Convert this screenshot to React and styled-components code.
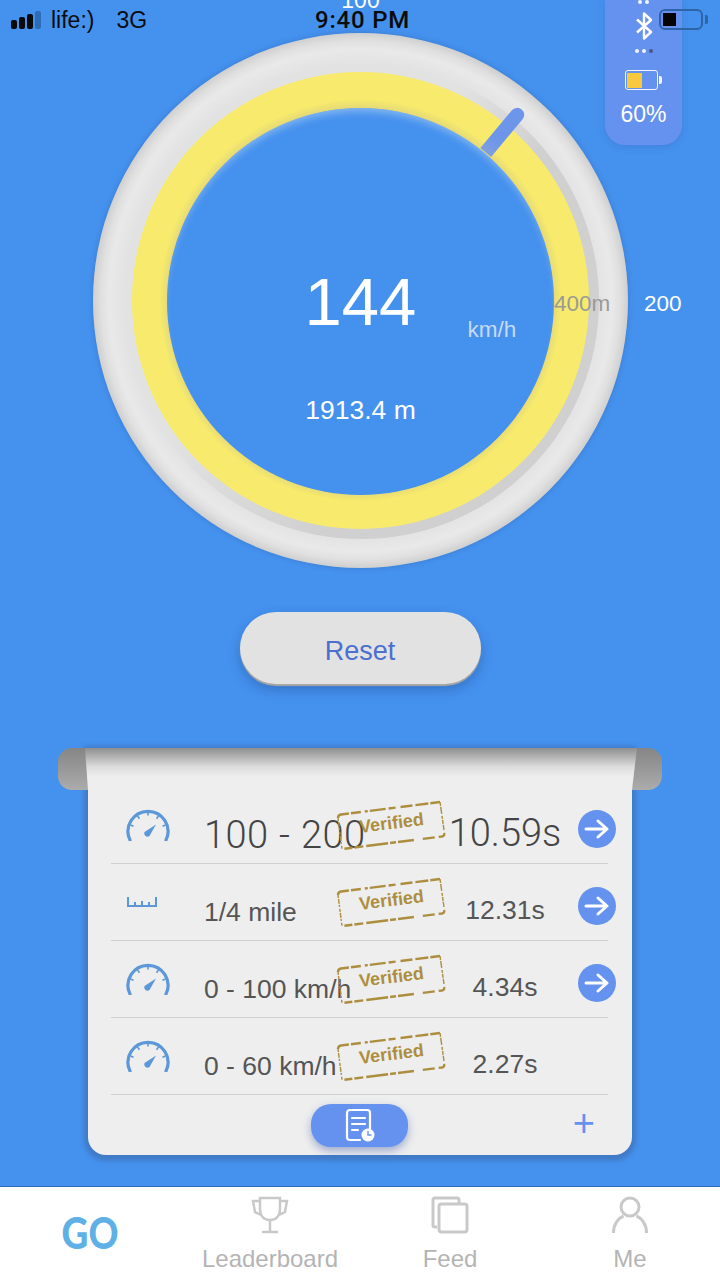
import React from "react";
import styled, { createGlobalStyle } from "styled-components";

const rows = [
  { kind: "gauge", label: "100 - 200", time: "10.59s", big: true, arrow: true },
  { kind: "ruler", label: "1/4 mile", time: "12.31s", arrow: true },
  { kind: "gauge", label: "0 - 100 km/h", time: "4.34s", arrow: true },
  { kind: "gauge", label: "0 - 60 km/h", time: "2.27s" },
];

function GaugeIcon() {
  return (
    <svg width="44" height="32" viewBox="0 0 44 32" fill="none" stroke="#5b97d9">
      <path d="M4 31 A20 20 0 1 1 40 31" strokeWidth="3.200" strokeLinecap="round" />
      <path d="M22 3v3.500M11.500 7l2 2.700M32.500 7l-2 2.700M4.500 16l3 1.200M39.500 16l-3 1.200" strokeWidth="1.600" />
      <path d="M18.500 23 L30 15.500 L23.500 27 A3.300 3.300 0 0 1 18.500 23Z" fill="#5b97d9" stroke="none" />
    </svg>
  );
}

function RulerIcon() {
  return (
    <svg width="32" height="12" viewBox="0 0 32 12" fill="none" stroke="#5b97d9" strokeWidth="2">
      <path d="M2 1v9h28V1M9 6v4M16 5v5M23 6v4" />
    </svg>
  );
}

function ArrowIcon() {
  return (
    <svg width="26" height="22" viewBox="0 0 26 22" fill="none" stroke="#fff" strokeWidth="3" strokeLinecap="round" strokeLinejoin="round">
      <path d="M2 11h21M14 3l9 8-9 8" />
    </svg>
  );
}

function StampFrame() {
  return (
    <StampSvg viewBox="0 0 110 50" fill="none" stroke="#ad8e3f">
      <path d="M2 18 Q2 15 5 14.500 L104 2" strokeWidth="2.400" strokeDasharray="13 2 10 4 3 2 16 3 7 5 12 3" />
      <path d="M104 2 L108 30" strokeWidth="1.400" strokeDasharray="4 1 7 2 3 1" />
      <path d="M108 33 Q109 36 106 36.500 L6 49" strokeWidth="2.400" strokeDasharray="8 4 12 9 16 2 6 2 22 3 9 2" />
      <path d="M2 18 L6 49" strokeWidth="1.400" strokeDasharray="3 1 5 1 2 2" />
    </StampSvg>
  );
}

function DocIcon() {
  return (
    <svg width="30" height="34" viewBox="0 0 30 34" fill="none" stroke="#fff" strokeWidth="2.200" strokeLinecap="round">
      <path d="M15 31H5a3 3 0 0 1-3-3V4a3 3 0 0 1 3-3h17a3 3 0 0 1 3 3v16" />
      <path d="M7 9h13M7 15h13M7 21h6" />
      <circle cx="23" cy="26" r="6.500" fill="#fff" stroke="none" />
      <path d="M23 22.500V26h3" stroke="#6592ee" strokeWidth="1.400" />
    </svg>
  );
}

function Trophy() {
  return (
    <svg width="38" height="38" viewBox="0 0 38 38" fill="none" stroke="#c9c9c9" strokeWidth="2.500">
      <path d="M9 2h20v11c0 7-4 11-10 11S9 20 9 13z" />
      <path d="M9 5H2l2 11 6 3M29 5h7l-2 11-6 3M19 24v11M11 36h16" />
    </svg>
  );
}

function Cards() {
  return (
    <svg width="38" height="38" viewBox="0 0 38 38" fill="none" stroke="#c9c9c9" strokeWidth="3">
      <path d="M6 31H4a2 2 0 0 1-2-2V4a2 2 0 0 1 2-2h22a2 2 0 0 1 2 2v3" />
      <rect x="8" y="8" width="28" height="28" rx="2.500" />
    </svg>
  );
}

function Person() {
  return (
    <svg width="38" height="38" viewBox="0 0 38 38" fill="none" stroke="#c9c9c9" strokeWidth="3">
      <circle cx="19" cy="11" r="9" />
      <path d="M2.500 37c0-9 5-15 10-17M35.500 37c0-9-5-15-10-17" />
    </svg>
  );
}

function Bluetooth() {
  return (
    <svg width="18" height="28" viewBox="0 0 18 28" fill="none" stroke="#fff" strokeWidth="2.400" strokeLinejoin="round">
      <path d="M2 7.500 16 20 9 26.500V1.500L16 8 2 20.500" />
    </svg>
  );
}

export default function App() {
  return (
    <Page>
      <GlobalStyle />
      <StatusBar>
        <Signal>
          <Bar $h={9} />
          <Bar $h={12} />
          <Bar $h={15} />
          <Bar $h={18} $dim />
        </Signal>
        <Carrier>life:)</Carrier>
        <Network>3G</Network>
        <Clock>9:40 PM</Clock>
        <PhoneBattery>
          <PhoneBatteryFill />
        </PhoneBattery>
      </StatusBar>

      <DevicePanel>
        <Dots $before={0} $after={8}>
          <Dot />
          <Dot />
        </Dots>
        <Bluetooth />
        <Dots $before={9} $after={17}>
          <Dot />
          <Dot />
          <Dot $off />
        </Dots>
        <SmallBattery>
          <SmallBatteryFill />
        </SmallBattery>
        <PanelText>60%</PanelText>
      </DevicePanel>

      <Dial>
        <TopMark>100</TopMark>
        <Groove>
          <YellowRing>
            <Inner>
              <SpeedWrap>
                <Speed>144</Speed>
                <Unit>km/h</Unit>
              </SpeedWrap>
              <Distance>1913.4 m</Distance>
            </Inner>
          </YellowRing>
        </Groove>
        <Needle />
        <RingMark>400m</RingMark>
        <SideMark>200</SideMark>
      </Dial>

      <ResetButton>Reset</ResetButton>

      <Sheet>
        <Curl $side="left" />
        <Curl $side="right" />
        <SheetTop />
        {rows.map((r, i) => (
          <Row key={i}>
            <IconCell>{r.kind === "gauge" ? <GaugeIcon /> : <RulerIcon />}</IconCell>
            <Label $big={r.big}>{r.label}</Label>
            <Stamp>
              <StampFrame />
              <StampText>Verified</StampText>
            </Stamp>
            <Time $big={r.big}>{r.time}</Time>
            {r.arrow && (
              <ArrowButton>
                <ArrowIcon />
              </ArrowButton>
            )}
          </Row>
        ))}
        <SheetFooter>
          <span />
          <Pill>
            <DocIcon />
          </Pill>
          <Plus>+</Plus>
        </SheetFooter>
      </Sheet>

      <TabBar>
        <Tab>
          <GoMark>GO</GoMark>
        </Tab>
        <Tab>
          <Trophy />
          <TabLabel>Leaderboard</TabLabel>
        </Tab>
        <Tab>
          <Cards />
          <TabLabel>Feed</TabLabel>
        </Tab>
        <Tab>
          <Person />
          <TabLabel>Me</TabLabel>
        </Tab>
      </TabBar>
    </Page>
  );
}

const GlobalStyle = createGlobalStyle`
  body {
    margin: 0;
    font-family: "Liberation Sans", Arial, sans-serif;
    background: #4591ee;
  }
`;

const Page = styled.div`
  position: relative;
  width: 720px;
  height: 1280px;
  overflow: hidden;
  display: flex;
  flex-direction: column;
  align-items: center;
  background: #4591ee;
`;

const StatusBar = styled.div`
  position: relative;
  z-index: 4;
  align-self: stretch;
  height: 33px;
  display: flex;
  align-items: flex-start;
  padding: 7px 0 0 11px;
  box-sizing: border-box;
  color: #0c0c0c;
  font-size: 23px;
  line-height: 27px;
`;

const Signal = styled.div`
  display: flex;
  align-items: flex-end;
  gap: 2px;
  height: 22px;
  width: 32px;
`;

const Bar = styled.div`
  width: 6px;
  height: ${(p) => p.$h}px;
  border-radius: 2px;
  background: ${(p) => (p.$dim ? "#2f6cb8" : "#0a0a0a")};
`;

const Carrier = styled.span`
  margin-left: 8px;
`;

const Network = styled.span`
  margin-left: 22px;
`;

const Clock = styled.span`
  position: absolute;
  left: 5px;
  right: 0;
  top: 7px;
  text-align: center;
  font-size: 24px;
  font-weight: 500;
  font-family: Roboto, "Liberation Sans", sans-serif;
  letter-spacing: 0.8px;
`;

const PhoneBattery = styled.div`
  position: absolute;
  left: 659px;
  top: 9px;
  width: 44px;
  height: 21px;
  box-sizing: border-box;
  padding: 2px;
  border: 2px solid #2f63a8;
  border-radius: 6px;
  &::after {
    content: "";
    position: absolute;
    right: -7px;
    top: 4px;
    width: 3px;
    height: 9px;
    background: #2f63a8;
    border-radius: 0 2px 2px 0;
  }
`;

const PhoneBatteryFill = styled.div`
  width: 13px;
  height: 100%;
  background: #050505;
`;

const DevicePanel = styled.div`
  position: absolute;
  z-index: 3;
  left: 605px;
  top: 0;
  width: 77px;
  height: 145px;
  display: flex;
  flex-direction: column;
  align-items: center;
  border-radius: 0 0 20px 20px;
  background: #6592ee;
  box-shadow: 0 2px 6px rgba(50, 90, 170, 0.25);
`;

const Dots = styled.div`
  display: flex;
  gap: 3px;
  height: 4px;
  margin: ${(p) => p.$before}px 0 ${(p) => p.$after}px;
`;

const Dot = styled.div`
  width: 4px;
  height: 4px;
  border-radius: 50%;
  background: ${(p) => (p.$off ? "#47598a" : "#f1f5ff")};
`;

const SmallBattery = styled.div`
  position: relative;
  width: 33px;
  height: 20px;
  box-sizing: border-box;
  padding: 1.5px;
  margin-right: 5px;
  border: 1px solid #f1f5ff;
  border-radius: 3px;
  &::after {
    content: "";
    position: absolute;
    right: -5px;
    top: 5px;
    width: 3px;
    height: 8px;
    background: #f1f5ff;
    border-radius: 0 2px 2px 0;
  }
`;

const SmallBatteryFill = styled.div`
  width: 15px;
  height: 100%;
  background: #f8c93e;
`;

const PanelText = styled.div`
  margin-top: 11px;
  color: #fff;
  font-size: 23px;
  line-height: 26px;
`;

const Dial = styled.div`
  position: relative;
  flex: none;
  width: 535px;
  height: 535px;
  margin-left: 1px;
  display: flex;
  align-items: center;
  justify-content: center;
  border-radius: 50%;
  background: radial-gradient(
    circle closest-side,
    #e2e2e2 88%,
    #e9e9e9 94%,
    #e0e0e0 97%,
    #cfcfcf 100%
  );
  box-shadow: 0 0 5px rgba(40, 80, 140, 0.35);
`;

const TopMark = styled.span`
  position: absolute;
  left: 0;
  right: 0;
  top: -46px;
  text-align: center;
  color: #fff;
  font-size: 23px;
  line-height: 27px;
`;

const Groove = styled.div`
  width: 476px;
  height: 476px;
  display: flex;
  align-items: center;
  justify-content: center;
  border-radius: 50%;
  background: conic-gradient(
    transparent 25deg,
    #d0d0d0 50deg,
    #d0d0d0 190deg,
    transparent 235deg,
    transparent 360deg
  );
`;

const YellowRing = styled.div`
  width: 457px;
  height: 457px;
  display: flex;
  align-items: center;
  justify-content: center;
  border-radius: 50%;
  background: radial-gradient(
    circle closest-side,
    #e4d878 84%,
    #f7ea6c 88%,
    #f7ea6c 100%
  );
`;

const Inner = styled.div`
  width: 387px;
  height: 387px;
  margin-top: 2px;
  box-sizing: border-box;
  padding-top: 158px;
  display: flex;
  flex-direction: column;
  align-items: center;
  border-radius: 50%;
  background: #4591ee;
  color: #fff;
  box-shadow: inset 0 7px 8px -4px rgba(170, 205, 245, 0.7);
`;

const SpeedWrap = styled.div`
  position: relative;
`;

const Speed = styled.div`
  font-size: 67px;
  line-height: 72px;
`;

const Unit = styled.span`
  position: absolute;
  left: 163px;
  top: 51px;
  color: #c8daf4;
  font-size: 22.500px;
  line-height: 26px;
  white-space: nowrap;
`;

const Distance = styled.div`
  margin-top: 58px;
  font-size: 26.500px;
  line-height: 28px;
`;

const Needle = styled.div`
  position: absolute;
  left: 50%;
  top: 50%;
  width: 14px;
  height: 56px;
  margin: -28px 0 0 -7px;
  border-radius: 7px 7px 0 0;
  background: linear-gradient(#6d95ea 70%, #7e9fe0);
  transform: rotate(40deg) translateY(-222px);
`;

const RingMark = styled.span`
  position: absolute;
  left: 461px;
  top: 258px;
  color: #9a9a96;
  font-size: 22.500px;
  line-height: 26px;
`;

const SideMark = styled.span`
  position: absolute;
  left: 551px;
  top: 258px;
  color: #fff;
  font-size: 22.500px;
  line-height: 26px;
`;

const ResetButton = styled.button`
  flex: none;
  width: 241px;
  height: 72px;
  margin-top: 44px;
  padding: 6px 0 0;
  border: none;
  border-radius: 36px;
  background: #e2e2e2;
  color: #4c6fd0;
  font-family: inherit;
  font-size: 27px;
  box-shadow: 0 2px 1px #a9a9a6, 0 6px 12px rgba(30, 70, 140, 0.4);
`;

const Sheet = styled.div`
  position: relative;
  flex: none;
  width: 544px;
  height: 407px;
  margin-top: 64px;
  padding: 39px 24px 0 23px;
  box-sizing: border-box;
  background: #eeeeee;
  border-radius: 0 0 18px 18px;
  box-shadow: 0 2px 4px 4px rgba(60, 90, 140, 0.4);
`;

const Curl = styled.div`
  position: absolute;
  top: 0;
  ${(p) => (p.$side === "left" ? "left: -30px;" : "right: -30px;")}
  width: 40px;
  height: 42px;
  border-radius: ${(p) => (p.$side === "left" ? "14px 0 0 14px" : "0 14px 14px 0")};
  background: linear-gradient(#858585, #acacac);
`;

const SheetTop = styled.div`
  position: absolute;
  left: -3px;
  right: -5px;
  top: 0;
  height: 42px;
  clip-path: polygon(0 0, 100% 0, calc(100% - 5px) 100%, 3px 100%);
  background: linear-gradient(#8f8f8f, #dcdcdc 45%, #eeeeee 68%);
`;

const Row = styled.div`
  position: relative;
  display: grid;
  grid-template-columns: 93px 132px 110px 118px 45px;
  align-items: center;
  height: 77px;
  box-sizing: border-box;
  border-bottom: 1.5px solid #cfcfcf;
`;

const IconCell = styled.div`
  display: flex;
  padding-left: 15px;
`;

const Label = styled.div`
  padding-top: 20px;
  white-space: nowrap;
  color: ${(p) => (p.$big ? "#444" : "#555")};
  font-family: ${(p) => (p.$big ? 'Roboto, "Liberation Sans", sans-serif' : "inherit")};
  font-weight: ${(p) => (p.$big ? 300 : 400)};
  font-size: ${(p) => (p.$big ? "38px" : "26.500px")};
  letter-spacing: ${(p) => (p.$big ? "0.4px" : "0")};
  word-spacing: ${(p) => (p.$big ? "1px" : "0")};
  line-height: 32px;
`;

const Stamp = styled.div`
  position: relative;
  width: 110px;
  height: 50px;
  display: flex;
  align-items: center;
  justify-content: center;
`;

const StampSvg = styled.svg`
  position: absolute;
  inset: 0;
`;

const StampText = styled.span`
  margin: -3px 0 0 1px;
  transform: rotate(-7deg);
  color: #ad8e3f;
  font-weight: 700;
  font-size: 18px;
`;

const Time = styled.div`
  padding-top: 15px;
  text-align: center;
  white-space: nowrap;
  color: ${(p) => (p.$big ? "#444" : "#555")};
  font-family: ${(p) => (p.$big ? 'Roboto, "Liberation Sans", sans-serif' : "inherit")};
  font-weight: ${(p) => (p.$big ? 300 : 400)};
  font-size: ${(p) => (p.$big ? "38px" : "26.500px")};
  line-height: 32px;
`;

const ArrowButton = styled.div`
  width: 38px;
  height: 38px;
  margin: 8px 0 0 14px;
  display: flex;
  align-items: center;
  justify-content: center;
  border-radius: 50%;
  background: #6592ee;
`;

const SheetFooter = styled.div`
  display: grid;
  grid-template-columns: 1fr auto 1fr;
  align-items: center;
  padding-top: 9px;
`;

const Pill = styled.div`
  width: 97px;
  height: 43px;
  display: flex;
  align-items: center;
  justify-content: center;
  border-radius: 20px;
  background: #6592ee;
  box-shadow: 0 4px 8px rgba(60, 90, 170, 0.45);
`;

const Plus = styled.div`
  justify-self: end;
  margin: 0 13px 5px 0;
  color: #6592ee;
  font-size: 38px;
  line-height: 36px;
`;

const TabBar = styled.div`
  flex: none;
  align-self: stretch;
  height: 94px;
  margin-top: 31px;
  display: grid;
  grid-template-columns: repeat(4, 1fr);
  background: #fff;
  border-top: 1px solid #2f6cb8;
  box-sizing: border-box;
`;

const Tab = styled.div`
  display: flex;
  flex-direction: column;
  align-items: center;
  padding-top: 9px;
`;

const GoMark = styled.div`
  margin-top: 12px;
  color: #5fb0e5;
  font-family: Lato, sans-serif;
  font-weight: 900;
  font-size: 43px;
  line-height: 50px;
  transform: scaleX(0.86);
`;

const TabLabel = styled.div`
  margin-top: 11px;
  color: #b4b4b4;
  font-size: 24px;
  line-height: 27px;
`;
